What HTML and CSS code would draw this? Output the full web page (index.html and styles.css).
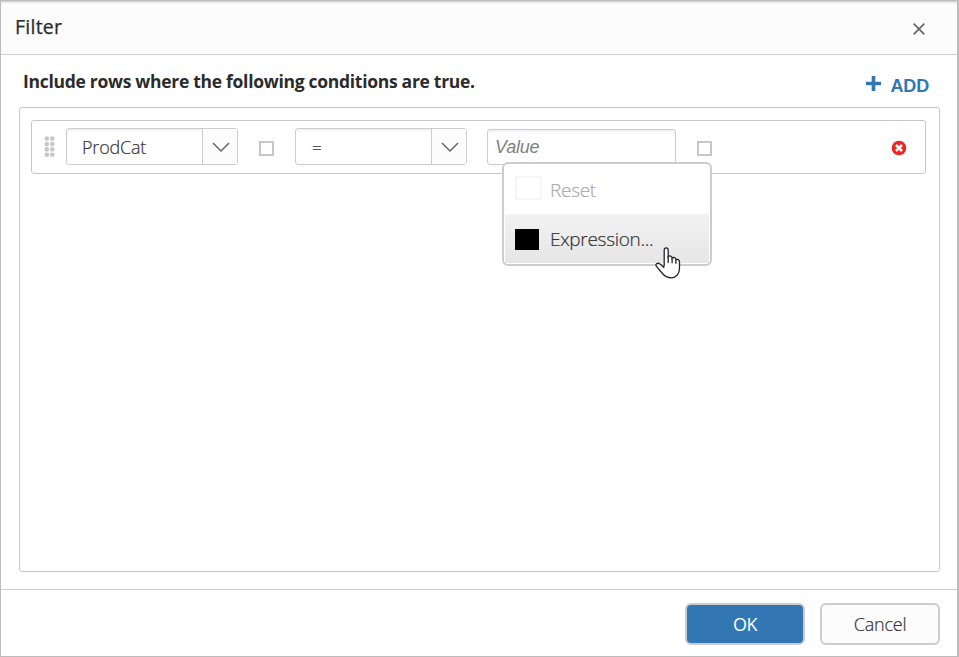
FILE: index.html
```html
<!DOCTYPE html>
<html lang="en">
<head>
<meta charset="utf-8">
<title>Filter</title>
<link rel="stylesheet" href="styles.css">
</head>
<body>
<div class="dialog">
  <header class="header">
    <h1 class="title"><span>Filter</span></h1>
    <svg class="close" width="12" height="12" viewBox="0 0 12 12"><path d="M.7.7 11.3 11.3M11.3.7.7 11.3"/></svg>
  </header>
  <main class="content">
    <div class="toolbar">
      <h2 class="lead"><span>Include rows where the following conditions are true.</span></h2>
      <div class="add">
        <svg width="15" height="15" viewBox="0 0 15 15"><path d="M7.5 0v15M0 7.5h15"/></svg>
        <span>ADD</span>
      </div>
    </div>
    <section class="panel">
      <div class="row">
        <svg class="grip" width="11" height="22" viewBox="0 0 11 22">
          <circle cx="2.8" cy="2.6" r="2.3"/><circle cx="8.3" cy="2.6" r="2.3"/>
          <circle cx="2.8" cy="8" r="2.3"/><circle cx="8.3" cy="8" r="2.3"/>
          <circle cx="2.8" cy="13.4" r="2.3"/><circle cx="8.3" cy="13.4" r="2.3"/>
          <circle cx="2.8" cy="18.8" r="2.3"/><circle cx="8.3" cy="18.8" r="2.3"/>
        </svg>
        <div class="select">
          <div class="select-text"><span class="field-name">ProdCat</span></div>
          <div class="select-arrow"><svg width="18" height="11" viewBox="0 0 18 11"><path d="M1 1l8 8 8-8"/></svg></div>
        </div>
        <i class="box box-field"></i>
        <div class="select">
          <div class="select-text"><span class="operator">=</span></div>
          <div class="select-arrow"><svg width="18" height="11" viewBox="0 0 18 11"><path d="M1 1l8 8 8-8"/></svg></div>
        </div>
        <div class="value">
          <span class="placeholder">Value</span>
          <div class="menu">
            <div class="item disabled"><i class="swatch"></i><span>Reset</span></div>
            <div class="item active"><i class="swatch"></i><span>Expression...</span></div>
            <svg class="cursor" width="27" height="34" viewBox="0 0 27 34"><path d="M9.2 20.5V4.2C9.2 1 13.2 1 13.2 4.2V10.6C14.5 9.3 17.1 10 17.1 12 18.7 11 20.9 11.6 20.9 13.6 22.5 12.8 24.5 13.8 24.5 16V22C24.5 28 21 31.8 16.5 31.8 12 31.8 9.5 30 7 27L1.3 20.2C-.1 18 2.8 16.3 5 18L9.2 21.7"/><path d="M13.2 10v7M17.1 12v5.2M20.9 13.5v4.3"/></svg>
          </div>
        </div>
        <i class="box box-value"></i>
        <svg class="remove" width="16" height="16" viewBox="0 0 16 16"><circle cx="8" cy="8" r="7.3"/><path d="M5 5l6 6M11 5l-6 6"/></svg>
      </div>
    </section>
  </main>
  <footer class="footer">
    <button class="button primary"><span>OK</span></button>
    <button class="button"><span>Cancel</span></button>
  </footer>
</div>
</body>
</html>
```

FILE: styles.css
```css
* { box-sizing: border-box; }
body { margin: 0; background: #fff; font-family: "Open Sans", "Noto Sans", sans-serif; color: #333; overflow: hidden; }
svg { display: block; fill: none; flex: none; }
.dialog { width: 959px; height: 657px; display: flex; flex-direction: column; border: 1px solid #bcbcbc; border-right-width: 2px; }
.header { height: 54px; flex: none; display: flex; justify-content: space-between; padding: 0 32px 0 14px; background: linear-gradient(#ccc 0, #f5f5f5 2px, #fcfcfc 4px); border-bottom: 1px solid #d0d0d0; }
.title { margin: 12px 0 0; font-size: 19.5px; line-height: 28px; font-weight: 500; color: #2b2b2b; letter-spacing: .25px; -webkit-text-stroke: .25px #2b2b2b; }
.close { margin-top: 22px; stroke: #6a6a6a; stroke-width: 1.8; }
.content { flex: 1; padding: 0 17px 17px 18px; display: flex; flex-direction: column; }
.toolbar { height: 52px; flex: none; display: flex; justify-content: space-between; padding: 0 11px 0 4px; }
.lead { margin: 13px 0 0; font-size: 17.5px; line-height: 26px; font-weight: 700; color: #2b2b2b; letter-spacing: -.29px; white-space: nowrap; }
.add { display: flex; gap: 9px; padding-top: 21px; color: #3277b3; font: 700 18px/20px "Liberation Sans", sans-serif; }
.add span { letter-spacing: -.15px; }
.add svg { stroke: #3277b3; stroke-width: 3.6; }
.panel { flex: 1; border: 1px solid #c7c7c7; border-radius: 3px; padding: 12px 13px 0 11px; }
.row { height: 54px; display: flex; align-items: flex-start; border: 1px solid #c7c7c7; border-radius: 3px; padding: 7px 18px 0 12px; }
.grip { fill: #c7c7c7; margin: 8px 11px 0 0; }
.select { width: 172px; height: 37px; flex: none; display: flex; border: 1px solid #ccc; border-radius: 3px; box-shadow: inset 0 2px 2px #f2f2f2; }
.select-text { flex: 1; padding-left: 15px; font-size: 18px; line-height: 36px; font-weight: 300; letter-spacing: -.2px; -webkit-text-stroke: .2px; }
.select-arrow { width: 35px; border-left: 1px solid #ccc; background: #fcfcfc; padding: 13px 0 0 9px; }
.select-arrow svg { stroke: #666; stroke-width: 1.5; }
.operator { font-size: 17px; margin-left: 1px; }
.box { width: 15px; height: 15px; flex: none; border: 2px solid #c7c7c7; margin-top: 13px; }
.box-field { margin-left: 21px; margin-right: 21px; }
.box-value { margin-left: 21px; }
.value { position: relative; width: 189px; height: 36px; flex: none; margin: 1px 0 0 20px; border: 1px solid #ccc; border-radius: 3px; padding-left: 7px; box-shadow: inset 0 2px 2px #f2f2f2; }
.placeholder { font: italic 18px/34px "Liberation Sans", sans-serif; color: #808080; letter-spacing: -.2px; }
.menu { position: absolute; left: 14px; top: 32px; width: 210px; height: 104px; padding: 1px; border: 2px solid #ccc; border-radius: 6px; background: #fff; }
.item { height: 49px; display: flex; align-items: center; gap: 9px; padding-left: 10px; font-size: 19px; font-weight: 300; letter-spacing: -.3px; -webkit-text-stroke: .2px; }
.disabled { color: #aaa; gap: 8px; }
.disabled .swatch { width: 27px; height: 24px; border: 2px solid #f6f6f6; margin-bottom: 3px; }
.active { gap: 11px; background: linear-gradient(#f2f2f2, #e6e6e6); }
.active .swatch { width: 24px; height: 21px; background: #000; margin-top: 2px; }
.cursor { position: absolute; left: 151px; top: 82px; stroke: #24242e; stroke-width: 1.3; }
.cursor path:first-child { fill: #fff; }
.remove { margin: 12px 0 0 auto; }
.remove circle { fill: #ed2525; }
.remove path { stroke: #fff; stroke-width: 2.5; }
.footer { height: 67px; flex: none; display: flex; justify-content: flex-end; gap: 15px; padding: 13px 17px 0 0; border-top: 1px solid #ccc; }
.button { width: 120px; height: 42px; padding: 0 0 1px; border: 2px solid #ccc; border-radius: 6px; background: #fcfcfc; color: #333; font: 300 18px/36px "Open Sans", sans-serif; letter-spacing: -.2px; -webkit-text-stroke: .2px; }
.primary { background: #3277b3; color: #fff; font-weight: 400; letter-spacing: -.4px; -webkit-text-stroke: 0; }
```
